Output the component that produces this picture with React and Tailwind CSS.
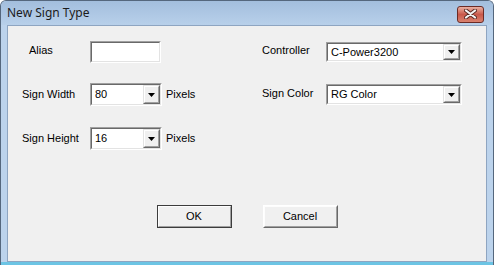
import React from "react";

const Combo = ({ value, width, height }) => (
  <div
    className={`flex bg-white border border-t-[#a0a0a0] border-l-[#a0a0a0] border-r-white border-b-white ${width} ${height}`}
  >
    <div className="flex flex-1 border border-t-[#696969] border-l-[#696969] border-r-[#e3e3e3] border-b-[#e3e3e3]">
      <div className="flex-1 flex items-center pl-[3px] text-[11px] text-black leading-none">
        {value}
      </div>
      <div className="w-[17px] flex bg-[#f0f0f0] border border-t-[#e3e3e3] border-l-[#e3e3e3] border-r-[#696969] border-b-[#696969]">
        <div className="flex-1 flex items-center justify-center border border-t-white border-l-white border-r-[#a0a0a0] border-b-[#a0a0a0]">
          <svg width="7" height="4" viewBox="0 0 7 4">
            <path d="M0 0h7L3.5 4z" fill="#000" />
          </svg>
        </div>
      </div>
    </div>
  </div>
);

const Button = ({ children, isDefault }) => (
  <div
    className={`w-[75px] h-[23px] flex border ${
      isDefault
        ? "border-[#3c3c3c]"
        : "border-t-white border-l-white border-r-[#696969] border-b-[#696969]"
    }`}
  >
    <div className="flex-1 flex items-center justify-center bg-[#f0f0f0] border border-t-[#fdfdfd] border-l-[#fdfdfd] border-r-[#a0a0a0] border-b-[#a0a0a0] text-[11px] text-black">
      {children}
    </div>
  </div>
);

const App = () => {
  return (
    <div
      className="w-[494px] h-[265px] overflow-hidden bg-[#bcd3ec] border border-b-0 border-[#55677d] rounded-t-[6px] flex flex-col"
      style={{ fontFamily: '"Liberation Sans", Arial, sans-serif' }}
    >
      {/* title bar */}
      <div className="h-[24px] shrink-0 flex items-center pl-[6px] pr-[9px] bg-gradient-to-b from-[#a3bedd] to-[#b8d0ea]">
        <div
          className="flex-1 text-[12px] text-[#1b1b1b] pb-[1px]"
          style={{ fontFamily: '"Noto Sans", "Open Sans", sans-serif' }}
        >
          New Sign Type
        </div>
        <div className="w-[27px] h-[17px] mt-[2px] rounded-[3px] border border-[#6b2b25] bg-gradient-to-b from-[#e8b0a2] via-[#c9584a] to-[#d9826f] flex items-center justify-center">
          <svg width="13" height="10" viewBox="0 0 13 10">
            <path
              d="M2 1.5l9 7M11 1.5l-9 7"
              stroke="#5a2a24"
              strokeWidth="4"
              strokeLinecap="round"
            />
            <path
              d="M2 1.5l9 7M11 1.5l-9 7"
              stroke="#f4f4f4"
              strokeWidth="2.2"
              strokeLinecap="round"
            />
          </svg>
        </div>
      </div>

      {/* client area */}
      <div className="flex-1 mx-[6px] border border-[#8ea5c1] bg-[#f0f0f0] flex flex-col">
        <div className="flex">
          {/* left column */}
          <div className="w-[254px] pl-[14px] pt-[15px] flex flex-col text-[11px] text-black">
            <div className="flex items-center h-[22px]">
              <div className="w-[68px] pl-[7px] pb-[4px]">Alias</div>
              <div className="w-[71px] h-[22px] flex bg-white border border-t-[#a0a0a0] border-l-[#a0a0a0] border-r-white border-b-white">
                <div className="flex-1 border border-t-[#696969] border-l-[#696969] border-r-[#e3e3e3] border-b-[#e3e3e3]" />
              </div>
            </div>
            <div className="flex items-center h-[23px] mt-[20px]">
              <div className="w-[68px]">Sign Width</div>
              <Combo value="80" width="w-[72px]" height="h-[23px]" />
              <div className="ml-[4px]">Pixels</div>
            </div>
            <div className="flex items-center h-[23px] mt-[21px]">
              <div className="w-[68px]">Sign Height</div>
              <Combo value="16" width="w-[72px]" height="h-[23px]" />
              <div className="ml-[4px]">Pixels</div>
            </div>
          </div>

          {/* right column */}
          <div className="pt-[16px] flex flex-col text-[11px] text-black">
            <div className="flex items-center h-[20px]">
              <div className="w-[64px] pb-[3px]">Controller</div>
              <Combo value="C-Power3200" width="w-[136px]" height="h-[20px]" />
            </div>
            <div className="flex items-center h-[21px] mt-[22px]">
              <div className="w-[64px] pb-[2px]">Sign Color</div>
              <Combo value="RG Color" width="w-[136px]" height="h-[21px]" />
            </div>
          </div>
        </div>

        <div className="flex justify-center gap-[31px] mt-[55px]">
          <Button isDefault>OK</Button>
          <Button>Cancel</Button>
        </div>
      </div>
      <div className="h-[3px] shrink-0 bg-[#6cc4e4]" />
    </div>
  );
};

export default App;
